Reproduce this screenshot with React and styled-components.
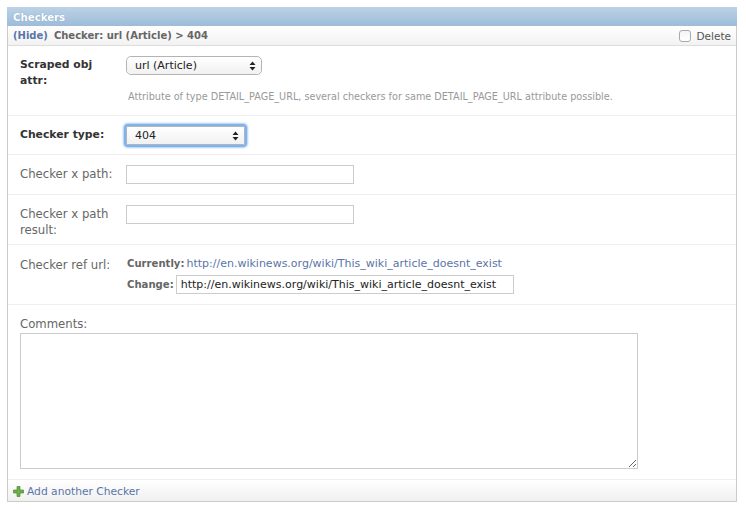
import styled, { createGlobalStyle } from 'styled-components';

const GlobalStyle = createGlobalStyle`
  html, body {
    margin: 0;
    padding: 0;
    background: #fff;
  }
  body {
    font-family: "DejaVu Sans", "Liberation Sans", sans-serif;
    font-size: 11px;
    color: #333;
  }
`;

const Page = styled.div`
  width: 730px;
  padding: 7px 9px 7px 7px;
`;

const Module = styled.div`
  border: 1px solid #ccc;
  border-top: none;
  border-bottom: none;
`;

const Title = styled.h2`
  margin: 0 -1px;
  height: 19px;
  padding: 0 6px;
  line-height: 21px;
  font-size: 10.2px;
  font-weight: bold;
  color: #fff;
  text-shadow: 0 0 1px #6d93ba;
  background: linear-gradient(#bcd2e6, #9dbcd9);
`;

const SubHeader = styled.div`
  display: flex;
  align-items: center;
  justify-content: space-between;
  height: 19px;
  padding: 0 5px 0 5px;
  font-size: 10px;
  font-weight: bold;
  color: #666;
  background: linear-gradient(#fff, #f2f2f2);
  border-bottom: 1px solid #ddd;
`;

const Link = styled.a`
  color: #5a75a8;
  text-decoration: none;
`;

const HideLink = styled(Link)`
  margin-right: 6px;
`;

const DeleteBox = styled.label`
  display: flex;
  align-items: center;
  gap: 6px;
  font-size: 10.5px;
  font-weight: normal;
  color: #555;
`;

const Check = styled.input`
  appearance: none;
  width: 12px;
  height: 12px;
  margin: 0;
  border: 1px solid #aaa;
  border-radius: 3px;
  background: linear-gradient(#f4f4f4, #fff);
`;

const Row = styled.div`
  display: flex;
  flex-direction: ${(p) => (p.$stacked ? 'column' : 'row')};
  align-items: flex-start;
  height: ${(p) => p.$height}px;
  padding: ${(p) => p.$top}px 12px 0;
  box-sizing: border-box;
  border-bottom: 1px solid #eee;
`;

const Label = styled.label`
  width: 96px;
  margin-right: 10px;
  flex-shrink: 0;
  padding-top: 1px;
  line-height: 16px;
  font-size: ${(p) => (p.$required ? '10.8px' : '11.7px')};
  font-weight: ${(p) => (p.$required ? 'bold' : 'normal')};
  color: ${(p) => (p.$required ? '#333' : '#666')};
`;

const Field = styled.div`
  display: flex;
  flex-direction: column;
`;

const SelectWrap = styled.div`
  position: relative;
  width: ${(p) => p.$width}px;
  height: 19px;
  border: 1px solid #b4b4b4;
  border-radius: ${(p) => (p.$focused ? '2px' : '5px')};
  box-sizing: border-box;
  box-shadow: ${(p) => (p.$focused ? '0 0 0 2px #7db4f0, 0 0 2px 3px #a9cdf5' : 'none')};
`;

const Select = styled.select`
  appearance: none;
  display: block;
  width: 100%;
  height: 100%;
  padding: 0 0 0 8px;
  border: none;
  background: linear-gradient(#fff, #f1f1f1);
  border-radius: inherit;
  font-family: inherit;
  font-size: 11px;
  color: #222;
  outline: none;
`;

const Arrows = styled.svg`
  position: absolute;
  right: 5px;
  top: 4px;
  pointer-events: none;
`;

const Help = styled.p`
  margin: 15px 0 0 2px;
  font-size: 9.66px;
  line-height: 14px;
  color: #999;
`;

const TextInput = styled.input`
  display: block;
  width: ${(p) => p.$width}px;
  height: 19px;
  padding: 0 4px;
  box-sizing: border-box;
  border: 1px solid #ccc;
  font-family: inherit;
  font-size: 11px;
  color: #222;
  outline: none;
`;

const FileLine = styled.div`
  display: flex;
  align-items: center;
  gap: 2px;
  height: 14px;
  margin-left: 1px;
  font-size: 11px;
  margin-bottom: ${(p) => p.$gap || 0}px;
`;

const ChangeLine = styled(FileLine)`
  height: 19px;
`;

const Strong = styled.strong`
  font-size: 10.1px;
  color: #666;
`;

const StackLabel = styled(Label)`
  width: auto;
  margin-right: 0;
  padding-top: 0;
  margin-bottom: 1px;
`;

const TextArea = styled.textarea`
  display: block;
  width: 618px;
  height: 136px;
  padding: 2px;
  box-sizing: border-box;
  border: 1px solid #ccc;
  outline: none;
`;

const Footer = styled.div`
  display: flex;
  align-items: center;
  gap: 3px;
  height: 20px;
  padding: 1px 5px 0;
  font-size: 10.7px;
  background: linear-gradient(#fff, #f0f0f0);
  border-bottom: 1px solid #ccc;
`;

const ArrowIcon = () => (
  <Arrows width="7" height="10" viewBox="0 0 7 10">
    <path d="M3.5 0.5 L6.5 4 H0.5 Z M3.5 9.5 L0.5 6 H6.5 Z" fill="#222" />
  </Arrows>
);

const PlusIcon = () => (
  <svg width="11" height="11" viewBox="0 0 11 11">
    <path
      d="M4 0.5 H7 V4 H10.5 V7 H7 V10.5 H4 V7 H0.5 V4 H4 Z"
      fill="#6bb04a"
      stroke="#3f7d20"
      strokeWidth="0.6"
    />
  </svg>
);

const url = 'http://en.wikinews.org/wiki/This_wiki_article_doesnt_exist';

export default function App() {
  return (
    <Page>
      <GlobalStyle />
      <Module>
        <Title>Checkers</Title>
        <SubHeader>
          <div>
            <HideLink href="#">(Hide)</HideLink>
            Checker: url (Article) &gt; 404
          </div>
          <DeleteBox>
            <Check type="checkbox" />
            Delete
          </DeleteBox>
        </SubHeader>

        <Row $height={70} $top={10}>
          <Label $required>Scraped obj attr:</Label>
          <Field>
            <SelectWrap $width={136}>
              <Select defaultValue="url">
                <option value="url">url (Article)</option>
              </Select>
              <ArrowIcon />
            </SelectWrap>
            <Help>Attribute of type DETAIL_PAGE_URL, several checkers for same DETAIL_PAGE_URL attribute possible.</Help>
          </Field>
        </Row>
        <Row $height={39} $top={10}>
          <Label $required>Checker type:</Label>
          <SelectWrap $width={119} $focused>
            <Select defaultValue="404">
              <option value="404">404</option>
            </Select>
            <ArrowIcon />
          </SelectWrap>
        </Row>
        <Row $height={40} $top={10}>
          <Label>Checker x path:</Label>
          <TextInput type="text" $width={228} />
        </Row>
        <Row $height={50} $top={10}>
          <Label>Checker x path result:</Label>
          <TextInput type="text" $width={228} />
        </Row>
        <Row $height={60} $top={11}>
          <Label>Checker ref url:</Label>
          <Field>
            <FileLine $gap={5}>
              <Strong>Currently:</Strong>
              <Link href="#">{url}</Link>
            </FileLine>
            <ChangeLine>
              <Strong>Change:</Strong>
              <TextInput type="text" $width={338} defaultValue={url} />
            </ChangeLine>
          </Field>
        </Row>
        <Row $stacked $height={175} $top={11}>
          <StackLabel>Comments:</StackLabel>
          <TextArea />
        </Row>
        <Footer>
          <PlusIcon />
          <Link href="#">Add another Checker</Link>
        </Footer>
      </Module>
    </Page>
  );
}
